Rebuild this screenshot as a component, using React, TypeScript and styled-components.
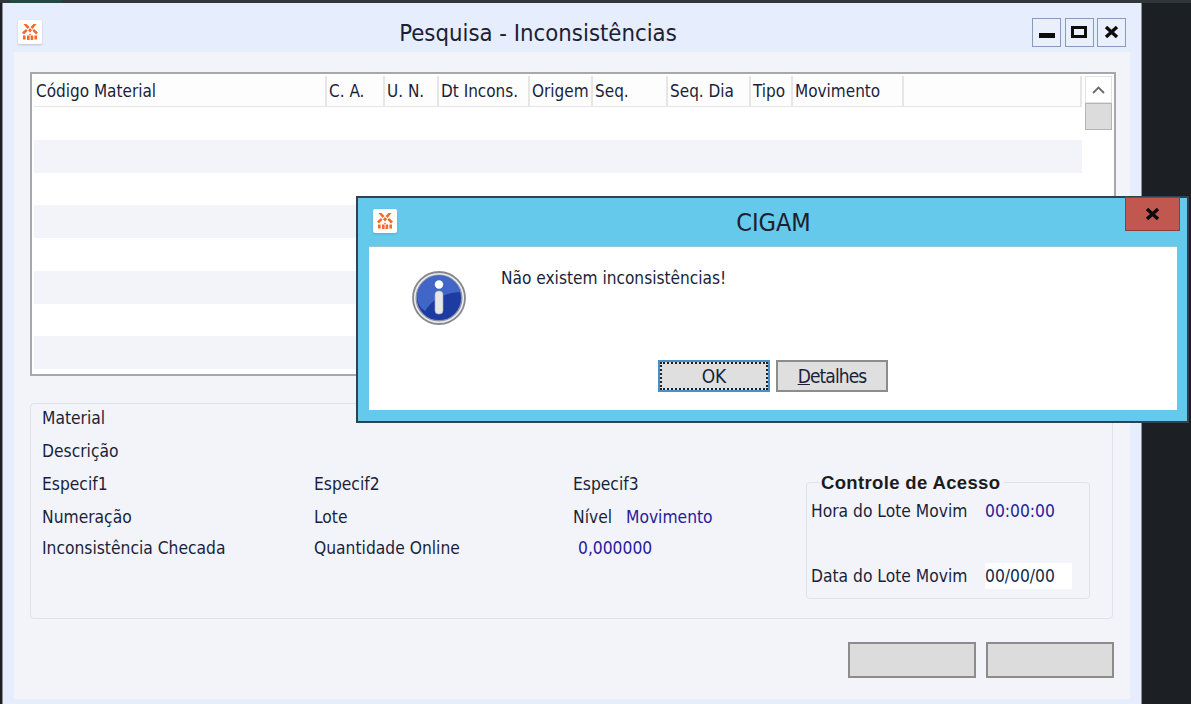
import React from "react";
import styled, { createGlobalStyle } from "styled-components";

const Global = createGlobalStyle`
  html, body { margin: 0; padding: 0; background: #1c1f24; }
  #root { width: 1191px; height: 704px; }
`;

const Screen = styled.div`
  position: relative;
  width: 1191px;
  height: 704px;
  overflow: hidden;
  background: #1c1f24;
  font-family: "DejaVu Sans", "Noto Sans", sans-serif;
  font-stretch: condensed;
  font-size: 17.3px;
  color: #1a1f3a;
`;
const TopStrip = styled.div`
  height: 3px;
  background: linear-gradient(to right, #30363a 10px, #1d4a42 10px, #1d4a42 62px, #30363a 62px);
`;
const Win = styled.div`
  margin-left: 2px;
  width: 1140px;
  height: 701px;
  background: #e6edfc;
  border-left: 1px solid #8d8f96;
  border-right: 1px solid #8d8f96;
  box-sizing: border-box;
  display: flex;
  flex-direction: column;
`;
const TitleBar = styled.div`
  height: 49px;
  flex: none;
  box-sizing: border-box;
  display: flex;
  align-items: center;
  padding: 9px 15px 0 15px;
  gap: 3.5px;
`;
const AppIcon = styled.div`
  width: 24px;
  height: 24px;
  background: #fff;
  border-radius: 2px;
  box-shadow: 0 1px 2px rgba(90, 100, 130, .3);
  display: flex;
  align-items: center;
  justify-content: center;
  flex: none;
`;
const WinTitle = styled.div<{ $size: number }>`
  flex: 1;
  text-align: center;
  font-size: ${p => p.$size}px;
  color: #1c2030;
  padding: 2px 0 0 2px;
`;
const Ctl = styled.div`
  width: 29px;
  height: 29px;
  box-sizing: border-box;
  border: 1px solid #8a9abf;
  background: #e9effd;
  display: flex;
  align-items: center;
  justify-content: center;
  flex: none;
`;
const Inner = styled.div`
  margin: 0 11px;
  height: 647px;
  flex: none;
  background: #f3f4fa;
  padding: 20px 16px 0 16px;
  box-sizing: border-box;
  display: flex;
  flex-direction: column;
`;
const TableFrame = styled.div`
  height: 304px;
  width: 1086px;
  box-sizing: border-box;
  border: 2px solid #a6a8ac;
  background: #fff;
  padding: 2px;
  display: flex;
  gap: 3px;
  flex: none;
`;
const TableArea = styled.div`
  width: 1048px;
  flex: none;
  overflow: hidden;
`;
const HeaderRow = styled.div`
  display: flex;
  height: 31px;
  border-bottom: 1px solid #e4e4e4;
  box-sizing: border-box;
  font-size: 17px;
`;
const HeadCell = styled.div<{ $w: number }>`
  width: ${p => p.$w}px;
  flex: none;
  box-sizing: border-box;
  padding: 0 0 0 2px;
  border-right: 2px solid #e6e6e6;
  background: #fdfdfd;
  display: flex;
  align-items: center;
  white-space: nowrap;
  overflow: hidden;
`;
const DataRow = styled.div<{ $alt: boolean }>`
  height: 32.75px;
  background: ${p => (p.$alt ? "#f3f4fa" : "#fff")};
`;
const ScrollBar = styled.div`
  width: 27px;
  flex: none;
  display: flex;
  flex-direction: column;
`;
const ScrollUp = styled.div`
  height: 27px;
  display: flex;
  align-items: center;
  justify-content: center;
  border: 1px solid #e2e2e2;
  box-sizing: border-box;
`;
const Thumb = styled.div`
  height: 27px;
  background: #dcdcdc;
  border: 1px solid #b5b5b5;
  box-sizing: border-box;
`;
const Panel = styled.div`
  margin-top: 27px;
  width: 1083px;
  height: 216px;
  box-sizing: border-box;
  border: 1px solid #dde3ea;
  border-radius: 4px;
  padding: 0 22px 0 11px;
  display: flex;
  justify-content: space-between;
  flex: none;
`;
const Fields = styled.div`
  display: grid;
  grid-template-columns: 272px 259px 53px 1fr;
  grid-template-rows: 33px 33px 33px 33px 29px;
  margin-top: -3px;
  width: 760px;
  height: 161px;
  align-items: center;
  flex: none;
`;
const FullRow = styled.div`
  grid-column: 1 / -1;
`;
const TailCell = styled.div`
  grid-column: 3 / -1;
`;
const Label = styled.div`
  white-space: nowrap;
`;
const BlueValue = styled.div<{ $shift?: number }>`
  color: #25209c;
  white-space: nowrap;
  margin-left: ${p => p.$shift ?? 0}px;
`;
const Group = styled.fieldset`
  margin: 68px 0 0 0;
  padding: 5px 4px 0 4px;
  width: 284px;
  height: 127px;
  box-sizing: border-box;
  border: 1px solid #dde3ea;
  border-radius: 4px;
  flex: none;
`;
const GroupTitle = styled.legend`
  margin-left: 8px;
  padding: 2px 4px 0 2px;
  font-family: "Liberation Sans", sans-serif;
  font-stretch: normal;
  font-weight: 700;
  font-size: 18.5px;
  letter-spacing: .35px;
  line-height: 18px;
  color: #1c1c20;
`;
const GroupRow = styled.div<{ $top?: number }>`
  display: grid;
  grid-template-columns: 174px 87px;
  height: 27px;
  align-items: center;
  margin-top: ${p => p.$top ?? 0}px;
`;
const DateField = styled.div`
  background: #fff;
  color: #10294a;
  height: 26px;
  line-height: 26px;
`;
const Actions = styled.div`
  margin-top: 23px;
  width: 1084px;
  display: flex;
  justify-content: flex-end;
  gap: 10px;
`;
const GrayButton = styled.button`
  width: 128px;
  height: 36px;
  padding: 0;
  background: #dcdcdc;
  border: 2px solid #8c8c8c;
`;

const Dialog = styled.div`
  position: absolute;
  left: 356px;
  top: 196px;
  width: 833px;
  height: 227px;
  box-sizing: border-box;
  border: 2px solid #33414c;
  background: #64c9ea;
  display: flex;
  flex-direction: column;
`;
const DlgBar = styled.div`
  position: relative;
  height: 48px;
  flex: none;
  box-sizing: border-box;
  display: flex;
  align-items: center;
  padding: 0 39px 2px 15px;
`;
const DlgClose = styled.div`
  position: absolute;
  top: -1px;
  left: 767px;
  width: 55px;
  height: 34px;
  box-sizing: border-box;
  background: #c0584f;
  border: 1px solid #8b4038;
  display: flex;
  align-items: center;
  justify-content: center;
`;
const DlgBody = styled.div`
  margin: 0 10px 0 11px;
  height: 164px;
  background: #fff;
  flex: none;
  box-sizing: border-box;
  border-top: 1px solid #9fc4d2;
  padding: 19px 0 0 43px;
  display: flex;
  flex-direction: column;
`;
const MsgRow = styled.div`
  display: flex;
  gap: 35px;
  height: 94px;
  flex: none;
`;
const InfoWrap = styled.div`
  margin-top: 5px;
  width: 54px;
  height: 54px;
  flex: none;
`;
const Msg = styled.div`
  line-height: 24px;
  font-size: 17.15px;
`;
const DlgButtons = styled.div`
  margin-left: 246px;
  display: flex;
  gap: 6px;
`;
const DlgBtn = styled.button<{ $focus?: boolean }>`
  width: 112px;
  height: 32px;
  padding: 0;
  background: #dfdfdf;
  border: 2px solid ${p => (p.$focus ? "#4a90c8" : "#8c8c8c")};
  outline: ${p => (p.$focus ? "2px dotted #222" : "none")};
  outline-offset: -4px;
  font: inherit;
  font-size: 19px;
  letter-spacing: ${p => (p.$focus ? "0" : "-.9px")};
  color: #1a1f3a;
`;
const Accel = styled.span`
  text-decoration: underline;
`;

const Logo = () => (
  <svg width="16" height="18" viewBox="0 0 16 18" fill="#f4692a">
    <path d="M1.5 1h3l3 3-2 2zM14.5 1h-3l-3 3 2 2zM8 5l2 2.2-2 2.3-2-2.3z" />
    <path d="M0 9.5l4-3.5 1.6 1.8L2 11.5zM16 9.5L12 6l-1.6 1.8 3.6 3.7zM8 10.5l1 1-1 1-1-1z" />
    <rect x="1" y="12.5" width="2.6" height="4" />
    <rect x="5" y="12.5" width="2.6" height="4.5" />
    <rect x="8.6" y="12.5" width="2.6" height="4.5" />
    <rect x="12.4" y="12.5" width="2.6" height="4" />
  </svg>
);

const InfoIcon = () => (
  <svg width="54" height="54" viewBox="0 0 54 54">
    <circle cx="27" cy="27" r="26" fill="#ececef" stroke="#85878c" strokeWidth="1.8" />
    <circle cx="27" cy="27" r="22.8" fill="#1d3ca2" stroke="#8d93a8" strokeWidth="1.4" />
    <path d="M5.2 26a21.8 21.8 0 0 1 43-5c-10 .5-26 4-35 19-5-3-8-8-8-14z" fill="#4266c8" />
    <circle cx="27" cy="13.5" r="4.2" fill="#fff" />
    <rect x="23" y="20" width="8" height="23" rx="3.5" fill="#e8e8e8" stroke="#a2a8bb" strokeWidth=".6" />
  </svg>
);

const CloseGlyph = () => (
  <svg width="15" height="12" viewBox="0 0 15 12">
    <path d="M2 1l11 10M13 1L2 11" stroke="#0c0c0c" strokeWidth="3.4" fill="none" />
  </svg>
);

const columns: [string, number][] = [
  ["Código Material", 293], ["C. A.", 58], ["U. N.", 54], ["Dt Incons.", 91], ["Origem", 63],
  ["Seq.", 75], ["Seq. Dia", 83], ["Tipo", 42], ["Movimento", 111], ["", 178],
];

export default function App() {
  return (
    <Screen>
      <Global />
      <TopStrip />
      <Win>
        <TitleBar>
          <AppIcon><Logo /></AppIcon>
          <WinTitle $size={23.7}>Pesquisa - Inconsistências</WinTitle>
          <Ctl>
            <svg width="16" height="12" viewBox="0 0 16 12"><rect y="7" width="16" height="5" fill="#0c0c0c" /></svg>
          </Ctl>
          <Ctl>
            <svg width="16" height="12" viewBox="0 0 16 12"><rect x="1.5" y="1.5" width="13" height="9" fill="none" stroke="#0c0c0c" strokeWidth="3" /></svg>
          </Ctl>
          <Ctl><CloseGlyph /></Ctl>
        </TitleBar>
        <Inner>
          <TableFrame>
            <TableArea>
              <HeaderRow>
                {columns.map(([t, w], i) => <HeadCell key={i} $w={w}>{t}</HeadCell>)}
              </HeaderRow>
              {Array.from({ length: 8 }, (_, i) => <DataRow key={i} $alt={i % 2 === 1} />)}
            </TableArea>
            <ScrollBar>
              <ScrollUp>
                <svg width="13" height="8" viewBox="0 0 13 8"><path d="M1 7l5.5-5.5L12 7" fill="none" stroke="#6a6a6a" strokeWidth="1.8" /></svg>
              </ScrollUp>
              <Thumb />
            </ScrollBar>
          </TableFrame>
          <Panel>
            <Fields>
              <FullRow><Label>Material</Label></FullRow>
              <FullRow><Label>Descrição</Label></FullRow>
              <Label>Especif1</Label>
              <Label>Especif2</Label>
              <TailCell><Label>Especif3</Label></TailCell>
              <Label>Numeração</Label>
              <Label>Lote</Label>
              <Label>Nível</Label>
              <BlueValue>Movimento</BlueValue>
              <Label>Inconsistência Checada</Label>
              <Label>Quantidade Online</Label>
              <BlueValue $shift={5}>0,000000</BlueValue>
            </Fields>
            <Group>
              <GroupTitle>Controle de Acesso</GroupTitle>
              <GroupRow>
                <Label>Hora do Lote Movim</Label>
                <BlueValue>00:00:00</BlueValue>
              </GroupRow>
              <GroupRow $top={38}>
                <Label>Data do Lote Movim</Label>
                <DateField>00/00/00</DateField>
              </GroupRow>
            </Group>
          </Panel>
          <Actions>
            <GrayButton />
            <GrayButton />
          </Actions>
        </Inner>
      </Win>
      <Dialog>
        <DlgBar>
          <AppIcon><Logo /></AppIcon>
          <WinTitle $size={25}>CIGAM</WinTitle>
          <DlgClose><CloseGlyph /></DlgClose>
        </DlgBar>
        <DlgBody>
          <MsgRow>
            <InfoWrap><InfoIcon /></InfoWrap>
            <Msg>Não existem inconsistências!</Msg>
          </MsgRow>
          <DlgButtons>
            <DlgBtn $focus>OK</DlgBtn>
            <DlgBtn><Accel>D</Accel>etalhes</DlgBtn>
          </DlgButtons>
        </DlgBody>
      </Dialog>
    </Screen>
  );
}
